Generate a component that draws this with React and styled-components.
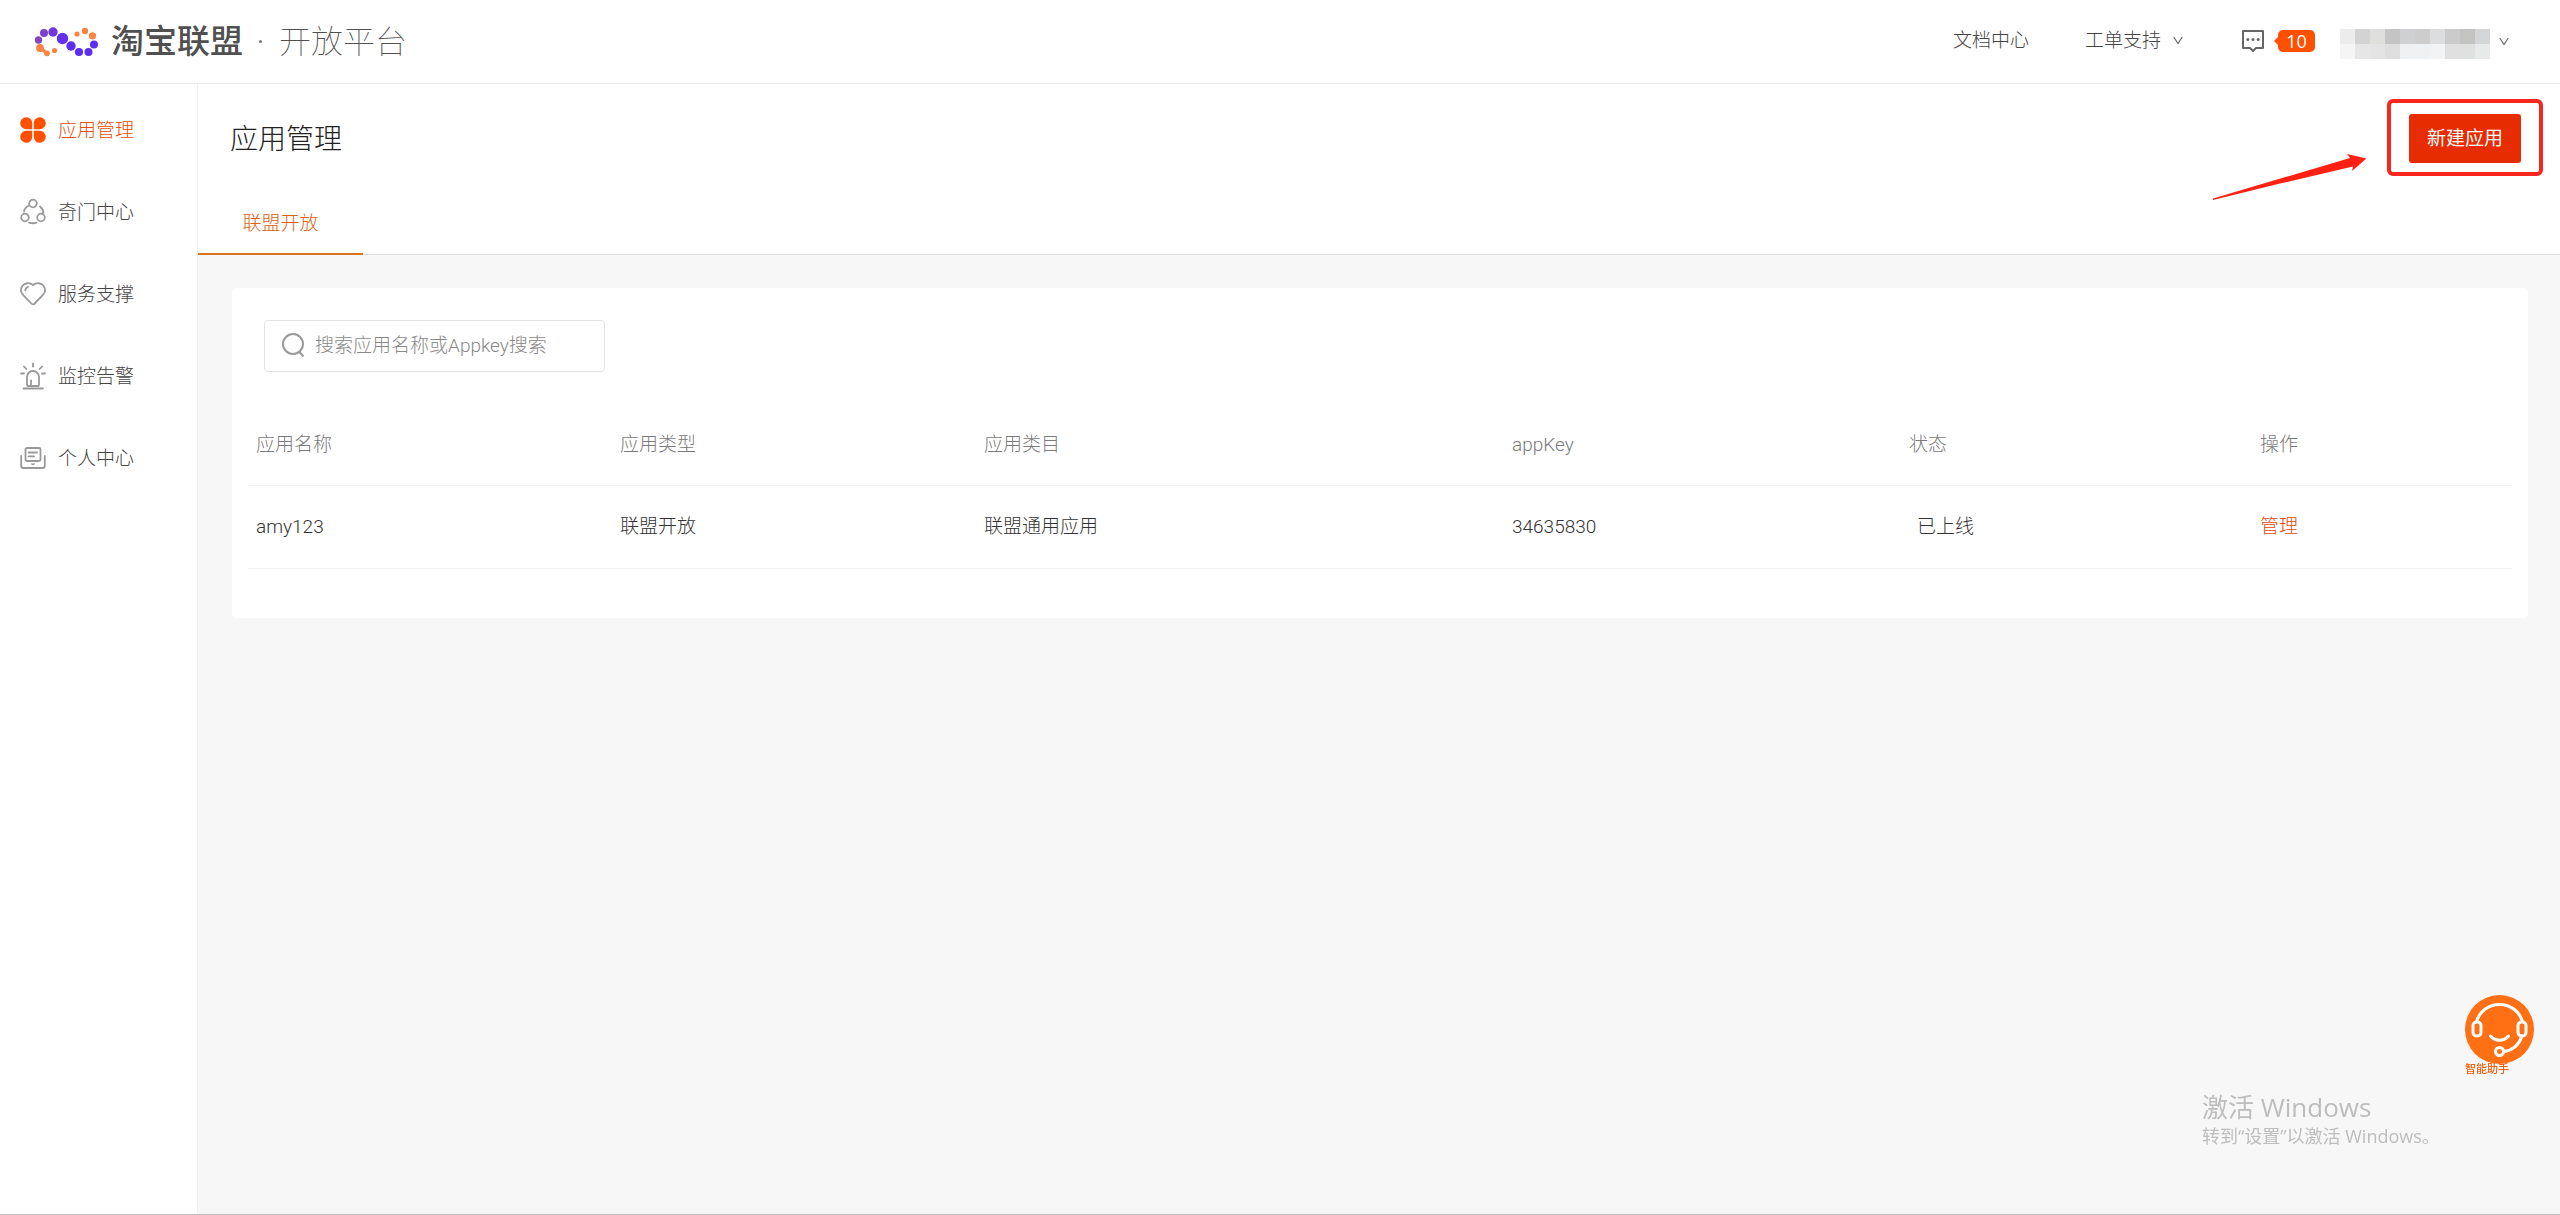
import React from 'react';
import styled, { createGlobalStyle } from 'styled-components';

const GlobalStyle = createGlobalStyle`
  * {
    box-sizing: border-box;
  }

  body {
    margin: 0;
    background-color: #f7f7f7;
    color: #444;
    font-family: Roboto, "Noto Sans CJK SC", sans-serif;
    font-size: 19px;
    font-weight: 300;
    line-height: 28px;
  }

  button,
  input {
    font: inherit;
  }
`;

const Page = styled.div`
  min-height: 100vh;
  display: flex;
  flex-direction: column;
  border-bottom: 1px solid #bdbdbd;
`;

/* Header */
const Header = styled.header`
  height: 84px;
  display: flex;
  align-items: center;
  justify-content: space-between;
  padding: 0 51px 0 34px;
  background-color: #fff;
  border-bottom: 1px solid #ebebeb;
`;

const Brand = styled.a`
  display: flex;
  align-items: center;
  color: #505050;
  text-decoration: none;
  white-space: nowrap;
`;

const BrandName = styled.span`
  margin-left: 12px;
  font-size: 33px;
  font-weight: 500;
  line-height: 40px;
`;

const BrandDot = styled.span`
  width: 3px;
  height: 3px;
  margin: 0 17px 0 16px;
  border-radius: 50%;
  background-color: #777;
`;

const BrandSub = styled.span`
  font-size: 32px;
  font-weight: 100;
  line-height: 40px;
`;

const Nav = styled.nav`
  display: flex;
  align-items: center;
`;

const NavLink = styled.a`
  display: flex;
  align-items: center;
  gap: 12px;
  margin-right: ${({ $gap }) => $gap}px;
  padding-bottom: 2px;
  color: #444;
  text-decoration: none;
`;

const Messages = styled.a`
  display: flex;
  align-items: center;
  gap: 14px;
  margin-right: 25px;
  padding-bottom: 2px;
  text-decoration: none;
`;

const Badge = styled.span`
  position: relative;
  width: 37px;
  border-radius: 5px;
  background-color: #ff5000;
  color: #fff;
  font-family: "Open Sans", sans-serif;
  font-size: 18px;
  font-weight: 400;
  line-height: 22px;
  text-align: center;

  &::before {
    content: "";
    position: absolute;
    top: 6px;
    left: -4px;
    border: solid transparent;
    border-width: 5px 5px 5px 0;
    border-right-color: #ff5000;
  }
`;

const Account = styled.button`
  display: flex;
  align-items: center;
  gap: 9px;
  padding: 4px 0 0;
  border: 0;
  background: none;

  > svg {
    margin-bottom: 4px;
  }
`;

/* Blurred out account name */
const Mosaic = styled.span`
  display: grid;
  grid-template-columns: repeat(10, 15px);
  grid-auto-rows: 15px;
`;

const MosaicCell = styled.span`
  background-color: ${({ $color }) => $color};
`;

/* Sidebar */
const Body = styled.div`
  flex: 1;
  display: flex;
`;

const Sidebar = styled.aside`
  width: 198px;
  flex-shrink: 0;
  padding-top: 5px;
  background-color: #fff;
  border-right: 1px solid #f0f0f0;
`;

const SideLink = styled.a`
  height: 82px;
  display: flex;
  align-items: center;
  gap: 12px;
  padding-left: 20px;
  color: ${({ $active }) => ($active ? '#e5500a' : '#444')};
  text-decoration: none;
`;

const SideLabel = styled.span`
  padding-top: 2px;
`;

const SideIcon = styled.svg`
  width: 26px;
  height: 26px;
  fill: none;
  stroke: #999;
  stroke-width: 1.8;
  stroke-linecap: round;
  stroke-linejoin: round;
`;

/* Content */
const Main = styled.main`
  flex: 1;
  min-width: 0;
`;

const PageHead = styled.section`
  background-color: #fff;
  border-bottom: 1px solid #dedede;
`;

const TitleRow = styled.div`
  display: flex;
  align-items: center;
  justify-content: space-between;
  padding: 30px 39px 27px 32px;
`;

const Title = styled.h1`
  margin: 0;
  padding-top: 2px;
  color: #222;
  font-size: 28px;
  font-weight: 300;
  line-height: 40px;
`;

const ActionWrap = styled.div`
  position: relative;
`;

const CreateButton = styled.button`
  display: block;
  width: 112px;
  height: 49px;
  padding: 0;
  border: 0;
  border-radius: 3px;
  background-color: #e62c00;
  color: #fff;
  font-weight: 400;
`;

const Highlight = styled.span`
  position: absolute;
  inset: -15px -22px -13px;
  border: 4px solid #f8261d;
  border-radius: 6px;
  pointer-events: none;
`;

const Arrow = styled.svg`
  position: absolute;
  top: 39px;
  right: 153px;
  width: 156px;
  height: 48px;
  fill: #fd2114;
`;

const Tabs = styled.div`
  display: flex;
  margin-bottom: -1px;
`;

const Tab = styled.button`
  width: 165px;
  height: 65px;
  padding: 4px 0 0;
  border: 0;
  border-bottom: 2px solid #d9731f;
  background: none;
  color: #e0600c;
`;

const Card = styled.section`
  margin: 33px 32px 33px 34px;
  padding: 32px 16px 49px;
  border-radius: 5px;
  background-color: #fff;
`;

const SearchBox = styled.label`
  width: 341px;
  height: 52px;
  display: flex;
  align-items: center;
  gap: 10px;
  margin: 0 16px 30px;
  padding: 0 16px;
  border: 1px solid #e3e3e3;
  border-radius: 4px;
`;

const SearchInput = styled.input`
  flex: 1;
  min-width: 0;
  padding: 0;
  border: 0;
  outline: 0;
  background: none;
  color: #444;

  &::placeholder {
    color: #888;
    opacity: 1;
  }
`;

const Table = styled.table`
  width: 100%;
  table-layout: fixed;
  border-collapse: collapse;
  text-align: left;
`;

const Th = styled.th`
  height: 83px;
  padding: 4px 8px 0;
  border-bottom: 1px solid #f2f2f2;
  color: #7a7a7a;
  font-weight: 300;
`;

const Td = styled.td`
  height: 83px;
  padding: 0 8px;
  border-bottom: 1px solid #f2f2f2;
  color: #333;
`;

const Status = styled.span`
  padding-left: 8px;
`;

const ManageLink = styled.a`
  color: #e04a0a;
  text-decoration: none;
`;

/* Floating parts */
const Assistant = styled.button`
  position: fixed;
  right: 26px;
  bottom: 139px;
  width: 69px;
  display: flex;
  flex-direction: column;
  align-items: flex-start;
  padding: 0;
  border: 0;
  background: none;
  color: #f2600c;
  font-size: 11px;
  font-weight: 500;
  line-height: 12px;
`;

const Watermark = styled.div`
  position: fixed;
  right: 124px;
  bottom: 66px;
  width: 234px;
  color: #bdbdbd;
  font-family: "Open Sans", "Noto Sans CJK SC", sans-serif;
  font-size: 18px;
  font-weight: 400;
  line-height: 26px;
  white-space: nowrap;
`;

const WatermarkTitle = styled.div`
  font-size: 26px;
  line-height: 32px;
`;

const logoDots = [
  [4.5, 13, 3.7, '#8445c5'],
  [10, 6, 4, '#7c40cc'],
  [19, 5, 4.7, '#6e38dc'],
  [28.5, 11.5, 5.7, '#6030ec'],
  [37, 19, 4.7, '#5a2ff2'],
  [45, 25, 4.1, '#5a2ff2'],
  [54.5, 25, 4, '#5a2ff2'],
  [60, 17.5, 4, '#5a2ff2'],
  [58.5, 8.8, 3.6, '#f98545'],
  [51, 4, 3.2, '#fc8440'],
  [43, 7, 2.6, '#fc8440'],
  [6, 21, 3.9, '#fc8440'],
  [13, 26.3, 2.9, '#fc8440'],
  [20.5, 23.5, 2.6, '#fc8440'],
];

const mosaicColors = [
  '#ececec', '#d3d3d4', '#dededd', '#c4c4c5', '#cfd0d1', '#cdcdce', '#dbdddf', '#cbcbcb', '#c3c3c1', '#d3d5d6',
  '#f5f5f5', '#e6e6e6', '#e4e4e4', '#dedede', '#eef0f1', '#eff1f2', '#f1f3f4', '#e0e0e0', '#dfe0e0', '#e8e9e9',
];

const menu = [
  {
    label: '应用管理',
    active: true,
    icon: (
      <g fill="#ff5000" stroke="none">
        <path d="M12.2 12.2H6.5A6 6 0 1 1 12.2 6.5Z" />
        <path d="M13.8 12.2V6.5A6 6 0 1 1 19.5 12.2Z" />
        <path d="M12.2 13.8V19.5A6 6 0 1 1 6.5 13.8Z" />
        <path d="M13.8 13.8H19.5A6 6 0 1 1 13.8 19.5Z" />
      </g>
    ),
  },
  {
    label: '奇门中心',
    icon: (
      <>
        <circle cx="13" cy="4.5" r="3.8" />
        <circle cx="5" cy="18.5" r="3.8" />
        <circle cx="21" cy="18.5" r="3.8" />
        <path d="M9 6.5C6 8 4.3 10 4 12.5M20 7.5C22.5 9.5 23.5 11.5 23.3 14M9 23.6C11.5 24.5 14 24.5 16.5 23.6" />
      </>
    ),
  },
  {
    label: '服务支撑',
    icon: (
      <>
        <path d="M13 4C9.5 1.3 4.7 1.7 2.3 5C.3 8 .9 11.5 3.3 14.2L11.3 22.5C12.4 23.6 13.6 23.6 14.7 22.5L22.7 14.2C25.1 11.5 25.7 8 23.7 5C21.3 1.7 16.5 1.3 13 4Z" />
        <path d="M5.3 9.5C5.3 7.5 6.3 6.3 8 5.8" />
      </>
    ),
  },
  {
    label: '监控告警',
    icon: (
      <path d="M7 22V14A6 6 0 0 1 19 14V22Q19 23 18 23H8Q7 23 7 22ZM11 22.5V17.5M3.5 25.5H23M13 .5V3.5M4 3.5L6.3 6M22 3.5L19.7 6M1 10.5H4M22 10.5H25" />
    ),
  },
  {
    label: '个人中心',
    icon: (
      <>
        <rect x="5.5" y="3" width="15" height="13" rx="1.5" />
        <path d="M8.5 7.5H17M8.5 11.3H14M1.2 11V21Q1.2 23 3.2 23H22.8Q24.8 23 24.8 21V11" />
        <path d="M11.8 18.8L13 19.6L14.2 18.8" strokeWidth="1.4" />
      </>
    ),
  },
];

const columns = [
  { title: '应用名称', width: 364 },
  { title: '应用类型', width: 364 },
  { title: '应用类目', width: 528 },
  { title: 'appKey', width: 397 },
  { title: '状态', width: 351 },
  { title: '操作', width: 260 },
];

const apps = [
  { name: 'amy123', type: '联盟开放', category: '联盟通用应用', appKey: '34635830', status: '已上线' },
];

const Chevron = () => (
  <svg width="10" height="9" viewBox="0 0 10 9" fill="none" stroke="#666" strokeWidth="1.2">
    <path d="M.7 1L5 7.5L9.3 1" />
  </svg>
);

const App = () => {
  return (
    <Page>
      <GlobalStyle />
      <Header>
        <Brand href="#">
          <svg width="65" height="30" viewBox="0 0 65 30">
            <path d="M6 21L13 26.3" stroke="#fc8440" strokeWidth="3" />
            {logoDots.map(([x, y, r, color]) => (
              <circle key={`${x}-${y}`} cx={x} cy={y} r={r} fill={color} />
            ))}
          </svg>
          <BrandName>淘宝联盟</BrandName>
          <BrandDot />
          <BrandSub>开放平台</BrandSub>
        </Brand>
        <Nav>
          <NavLink href="#" $gap={56}>文档中心</NavLink>
          <NavLink href="#" $gap={59}>
            工单支持
            <Chevron />
          </NavLink>
          <Messages href="#">
            <svg width="22" height="24" viewBox="0 0 22 24" fill="none" stroke="#666" strokeWidth="2">
              <path d="M1 2H21V19H14L11 22L8 19H1Z" strokeLinejoin="round" />
              <g fill="#666" stroke="none">
                <circle cx="5.8" cy="10.5" r="1.5" />
                <circle cx="11" cy="10.5" r="1.5" />
                <circle cx="16.2" cy="10.5" r="1.5" />
              </g>
            </svg>
            <Badge>10</Badge>
          </Messages>
          <Account type="button">
            <Mosaic>
              {mosaicColors.map((color, i) => (
                <MosaicCell key={i} $color={color} />
              ))}
            </Mosaic>
            <Chevron />
          </Account>
        </Nav>
      </Header>
      <Body>
        <Sidebar>
          {menu.map((item) => (
            <SideLink key={item.label} href="#" $active={item.active}>
              <SideIcon viewBox="0 0 26 26" overflow="visible">{item.icon}</SideIcon>
              <SideLabel>{item.label}</SideLabel>
            </SideLink>
          ))}
        </Sidebar>
        <Main>
          <PageHead>
            <TitleRow>
              <Title>应用管理</Title>
              <ActionWrap>
                <CreateButton type="button">新建应用</CreateButton>
                <Highlight />
                <Arrow viewBox="0 0 156 48">
                  <path d="M1 45.5L138 5L135 1L154.5 5.5L140 18L141 13.5L66 31L1 47Z" />
                </Arrow>
              </ActionWrap>
            </TitleRow>
            <Tabs>
              <Tab type="button">联盟开放</Tab>
            </Tabs>
          </PageHead>
          <Card>
            <SearchBox>
              <svg width="24" height="28" viewBox="0 0 24 28" fill="none" stroke="#999" strokeWidth="2">
                <circle cx="12" cy="12" r="10" />
                <path d="M17.5 19L22.5 24.5" />
              </svg>
              <SearchInput type="text" placeholder="搜索应用名称或Appkey搜索" />
            </SearchBox>
            <Table>
              <colgroup>
                {columns.map((col) => (
                  <col key={col.title} width={col.width} />
                ))}
              </colgroup>
              <thead>
                <tr>
                  {columns.map((col) => (
                    <Th key={col.title}>{col.title}</Th>
                  ))}
                </tr>
              </thead>
              <tbody>
                {apps.map((app) => (
                  <tr key={app.appKey}>
                    <Td>{app.name}</Td>
                    <Td>{app.type}</Td>
                    <Td>{app.category}</Td>
                    <Td>{app.appKey}</Td>
                    <Td>
                      <Status>{app.status}</Status>
                    </Td>
                    <Td>
                      <ManageLink href="#">管理</ManageLink>
                    </Td>
                  </tr>
                ))}
              </tbody>
            </Table>
          </Card>
        </Main>
      </Body>
      <Assistant type="button">
        <svg width="69" height="69" viewBox="0 0 69 69" fill="none" stroke="#fff" strokeWidth="3">
          <circle cx="34.5" cy="34.5" r="34.5" fill="#ff6f14" stroke="none" />
          <path d="M11.5 27C14 17 23 9.5 34.5 9.5S55 17 57.5 27" />
          <rect x="8" y="27" width="8" height="14" rx="3.5" />
          <rect x="53" y="27" width="8" height="14" rx="3.5" />
          <path d="M25.5 41C30 46.5 39 46.5 43.5 41M57 41C54 50 47 55.5 38.5 56.5" strokeLinecap="round" />
          <circle cx="34.5" cy="56.5" r="4" />
        </svg>
        智能助手
      </Assistant>
      <Watermark>
        <WatermarkTitle>激活 Windows</WatermarkTitle>
        转到“设置”以激活 Windows。
      </Watermark>
    </Page>
  );
};

export default App;
